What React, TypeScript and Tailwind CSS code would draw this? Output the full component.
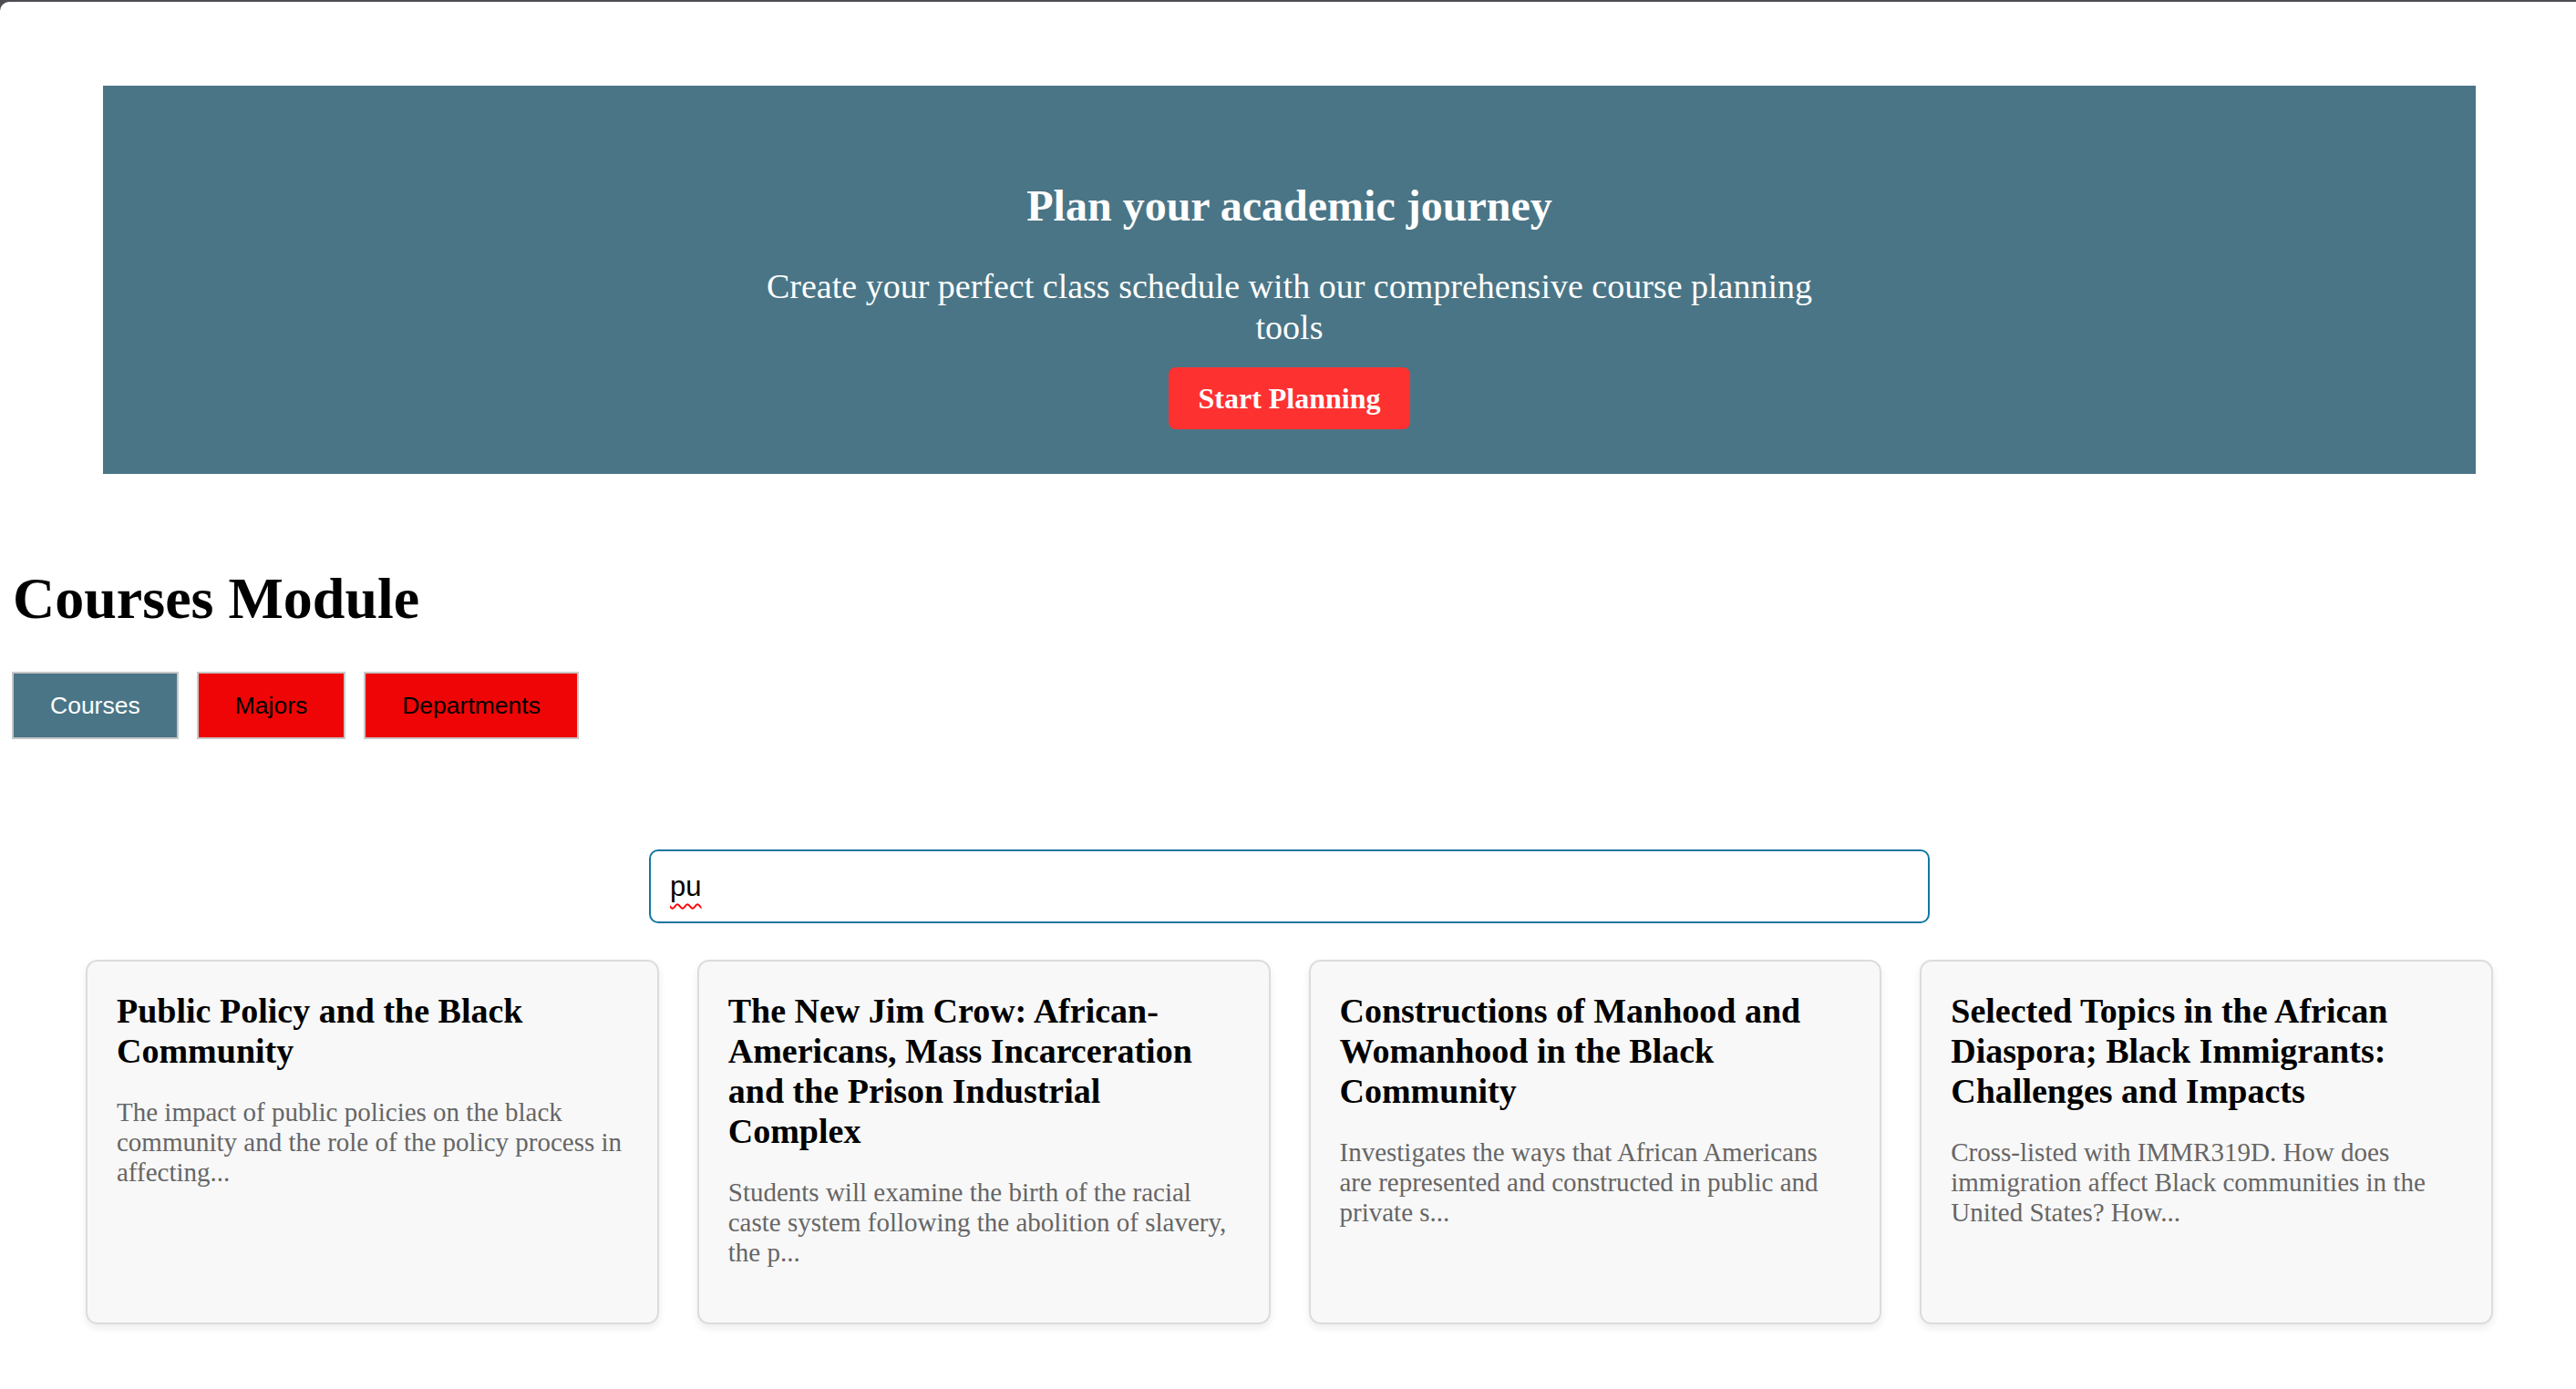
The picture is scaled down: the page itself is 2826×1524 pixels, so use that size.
import { useState } from "react";

const courses = [
  {
    title: "Public Policy and the Black Community",
    description:
      "The impact of public policies on the black community and the role of the policy process in affecting...",
  },
  {
    title:
      "The New Jim Crow: African-Americans, Mass Incarceration and the Prison Industrial Complex",
    description:
      "Students will examine the birth of the racial caste system following the abolition of slavery, the p...",
  },
  {
    title: "Constructions of Manhood and Womanhood in the Black Community",
    description:
      "Investigates the ways that African Americans are represented and constructed in public and private s...",
  },
  {
    title:
      "Selected Topics in the African Diaspora; Black Immigrants: Challenges and Impacts",
    description:
      "Cross-listed with IMMR319D. How does immigration affect Black communities in the United States? How...",
  },
];

const tabs = ["Courses", "Majors", "Departments"];

function CourseCard({ title, description }: { title: string; description: string }) {
  return (
    <div className="h-[400px] rounded-[13px] border-2 border-[#dcdcdc] bg-[#f8f8f8] p-[32px] shadow-[0_4px_8px_rgba(0,0,0,0.08)]">
      <h3 className="text-[38px] leading-[44px] font-bold text-black">{title}</h3>
      <p className="mt-[29px] text-[29px] leading-[33px] text-[#666666]">{description}</p>
    </div>
  );
}

export default function App() {
  const [active, setActive] = useState("Courses");
  const [query, setQuery] = useState("pu");

  return (
    <div className="min-h-[1524px] bg-[#4d4d52] pt-[2px] font-['Liberation_Serif',serif]">
      <div className="min-h-[1522px] rounded-tl-[10px] bg-white pt-[92px] pb-[70px]">
        <section className="ml-[113px] mr-[110px] bg-[#4a7586] pt-[104px] pb-[49px] text-center text-white">
          <h2 className="text-[48px] leading-[56px] font-bold">Plan your academic journey</h2>
          <p className="mx-auto mt-[38px] max-w-[1190px] text-[38px] leading-[45px]">
            Create your perfect class schedule with our comprehensive course planning tools
          </p>
          <button className="mt-[21px] rounded-[8px] bg-[#fe3131] px-[32px] py-[15px] text-[32px] leading-[38px] font-bold text-white">
            Start Planning
          </button>
        </section>

        <h1 className="mt-[100px] pl-[14px] text-[64px] leading-[74px] font-bold text-black">
          Courses Module
        </h1>

        <div className="mt-[43px] flex gap-[20px] pl-[13px] font-['Liberation_Sans',Arial,sans-serif]">
          {tabs.map((tab) => (
            <button
              key={tab}
              onClick={() => setActive(tab)}
              className={`${
                active === tab ? "bg-[#4a7586] text-white" : "bg-[#ef0505] text-black"
              } border-2 border-[#c8c8c8] px-[40px] py-[20px] text-[26.5px] leading-[30px]`}
            >
              {tab}
            </button>
          ))}
        </div>

        <div className="mt-[121px] ml-[712px] w-[1405px]">
          <div className="relative">
            <input
              value={query}
              onChange={(e) => setQuery(e.target.value)}
              spellCheck
              className="h-[81px] w-full rounded-[10px] border-2 border-[#1477a0] bg-white pl-[21px] font-['Liberation_Sans',Arial,sans-serif] text-[31px] text-black outline-none"
            />
            <span className="pointer-events-none absolute top-[20px] left-[23px] font-['Liberation_Sans',Arial,sans-serif] text-[31px] leading-[41px] text-transparent underline decoration-[#ff0000] decoration-wavy decoration-[2px] underline-offset-[8px]">
              {query}
            </span>
          </div>
        </div>

        <div className="mt-[40px] ml-[94px] grid w-[2641px] grid-cols-4 gap-[42px]">
          {courses.map((c) => (
            <CourseCard key={c.title} title={c.title} description={c.description} />
          ))}
        </div>
      </div>
    </div>
  );
}
